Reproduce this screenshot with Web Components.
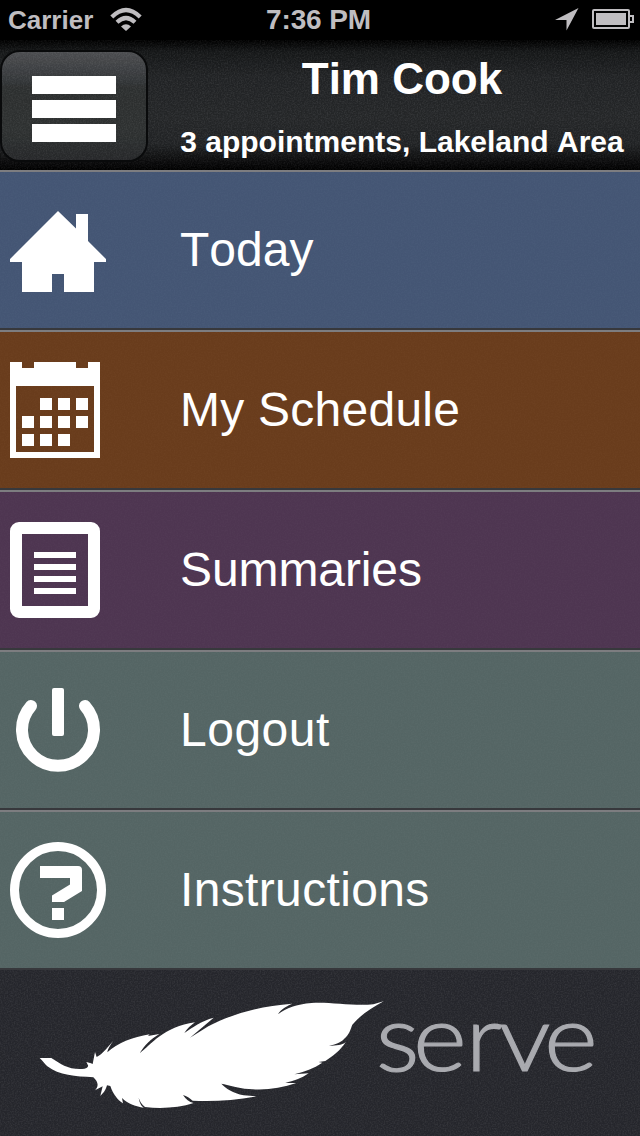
<!DOCTYPE html>
<html lang="en"><head><meta charset="utf-8"><title>Serve</title>
<style>body{margin:0;background:#000;font-family:"Liberation Sans",Arial,sans-serif}</style></head>
<body><serve-app></serve-app>
<script>
const define=(name,html)=>customElements.define(name,class extends HTMLElement{
  constructor(){super();this.attachShadow({mode:'open'}).innerHTML=html;}
});

define('grain-fill',`<style>:host{position:absolute;inset:0;pointer-events:none;overflow:hidden;opacity:var(--grain,.1)}svg{display:block;width:100%;height:100%}</style>
<svg><filter id="n" x="0" y="0" width="100%" height="100%" color-interpolation-filters="sRGB"><feTurbulence type="fractalNoise" baseFrequency=".7" numOctaves="2" seed="4"/><feColorMatrix values="1.6 0 0 0 -.6  1.6 0 0 0 -.6  1.6 0 0 0 -.6  0 0 0 0 1"/></filter><rect width="100%" height="100%" filter="url(#n)"/></svg>`);

define('status-bar',`<style>
:host{display:grid;grid-template-columns:1fr auto 1fr;height:40px;box-sizing:border-box;background:#000;color:#bfbdc0;font-weight:bold;line-height:40px;padding:0 6px 0 8px}
.l{display:flex;gap:17px;font-size:26px}.c{font-size:28px;letter-spacing:-.1px;margin:0 5px 0 0}.r{display:flex;justify-content:flex-end;gap:13px}svg{display:block}
</style><div class="l"><span>Carrier</span><svg width="32" height="40" viewBox="110 0 32 40" fill="none" stroke="#bfbdc0"><path d="M111.8 17Q126 3 140.2 17" stroke-width="4.2"/><path d="M117 22.3Q126 13.8 135 22.3" stroke-width="4.2"/><path d="M121 26.5Q126 22 131 26.5L126 31Z" fill="#bfbdc0" stroke="none"/></svg></div>
<div class="c">7:36 PM</div>
<div class="r"><svg width="24" height="40" viewBox="555 0 24 40"><path d="M578.5 8L566.5 30.5V20H555Z" fill="#bfbdc0"/></svg>
<svg width="42" height="40" viewBox="592 0 42 40"><rect x="593" y="10" width="36" height="18" rx="1" fill="none" stroke="#bfbdc0" stroke-width="2"/><path d="M596 13h30v12h-30z" fill="#bfbdc0"/><path d="M630 16h3v6h-3" fill="none" stroke="#bfbdc0" stroke-width="2"/></svg></div>`);

define('menu-button',`<style>
:host{display:flex;position:relative;overflow:hidden;box-sizing:border-box;width:148px;height:112px;border:2px solid #090a0b;border-radius:20px;background:linear-gradient(#525356,#3b3e41 24%,#303333 34%,#323636 72%,#2a2b2d);flex-direction:column;align-items:center;justify-content:center;gap:6px;flex:none}
i{width:84px;height:18px;background:#fff;position:relative;top:3px;z-index:1}grain-fill{--grain:.08}
</style><grain-fill></grain-fill><i></i><i></i><i></i>`);

define('title-bar',`<style>
:host{position:relative;display:flex;height:130px;box-sizing:border-box;padding:10px 0 0;background:linear-gradient(#000,#17191a 9%,#242628 28%,#282a2c 60%,#242628 80%,#0b0b0c 94%,#000);color:#fff;font-weight:bold}
grain-fill{--grain:.09}
menu-button{z-index:1}.t{position:relative;width:444px;margin-left:32px;text-align:center;white-space:nowrap}
.n{font-size:44px;line-height:50px;padding-top:4px;font-kerning:none}.s{font-size:30px;line-height:34px;margin-top:21px;font-kerning:none}
</style><grain-fill></grain-fill><menu-button></menu-button><div class="t"><div class="n"><slot name="name"></slot></div><div class="s"><slot></slot></div></div>`);

define('menu-row',`<style>
:host{position:relative;display:flex;box-sizing:border-box;height:160px;border-top:2px solid #7d7d80;border-bottom:2px solid #37383c;background:var(--tone);color:#fff;font-size:48px;line-height:156px}
.icon{width:180px;flex:none}.label{position:relative;font-kerning:none;letter-spacing:var(--track,0)}grain-fill{--grain:.02}
</style><grain-fill></grain-fill><div class="icon"><slot name="icon"></slot></div><div class="label"><slot></slot></div>`);

const icon=(name,body)=>define(name,`<style>:host{display:block;position:relative}svg{display:block}</style><svg width="120" height="156" viewBox="0 2 120 156" fill="#fff">${body}</svg>`);
icon('icon-home','<path d="M58 41L76 58.5V44h12v27l18 18v3H94v30H64v-18H52v18H22V92H10v-3Z"/>');
icon('icon-calendar','<path fill-rule="evenodd" d="M10 32h12v6h12v-6h42v6h12v-6h12v96H10ZM16 56v66h78V56Z"/><path d="M40 68h12v12H40zM58 68h12v12H58zM76 68h12v12H76zM22 86h12v12H22zM40 86h12v12H40zM58 86h12v12H58zM76 86h12v12H76zM22 104h12v12H22zM40 104h12v12H40zM58 104h12v12H58z"/>');
icon('icon-list','<path fill-rule="evenodd" d="M19 32h72a9 9 0 0 1 9 9v78a9 9 0 0 1-9 9H19a9 9 0 0 1-9-9V41a9 9 0 0 1 9-9ZM22 44v72h66V44Z"/><path d="M34 62h42v6H34zM34 74h42v6H34zM34 86h42v6H34zM34 98h42v6H34z"/>');
icon('icon-power','<path d="M31 56A36 36 0 1 0 85 56" fill="none" stroke="#fff" stroke-width="12" stroke-linecap="round"/><rect x="52" y="38" width="12" height="48" rx="2"/>');
icon('icon-help','<circle cx="58" cy="80" r="43.5" fill="none" stroke="#fff" stroke-width="9"/><path d="M40 56h38a4 4 0 0 1 4 4v21L64 92H52V85.5L70 74.5V68H40zM52 98h12v12H52z"/>');

define('brand-footer',`<style>
:host{position:relative;display:block;height:166px;background:#292a30}svg{position:relative;display:block}
grain-fill{--grain:.08}
text{font-family:Lato,"Liberation Sans",sans-serif;font-weight:300}
</style><grain-fill></grain-fill><svg width="640" height="166" viewBox="0 970 640 166"><g transform="translate(30 990) scale(.33333)" fill="#fff">
<path d="M29 204L64 204C91 222 116 239 156 237C169 236 176 232 174 226L169 216L183 220L188 222L195 186L200 201C218 192 233 172 249 153C244 162 233 177 232 187C262 160 308 141 359 133L354 138L388 132C363 146 341 169 329 190C362 165 401 110 495 97C484 105 470 117 463 129C487 113 515 92 551 83L480 143L535 109C604 73 686 48 787 41C773 46 750 59 744 73C770 54 798 43 845 39C895 35 972 49 1030 43L1061 34C1026 53 992 74 967 104C960 121 959 132 942 147C934 157 915 164 897 167C918 167 939 165 948 155C930 182 910 197 886 213L866 216L877 218C851 236 824 244 793 253L836 250C814 266 791 272 766 279L799 279C753 295 704 302 657 297C620 295 596 284 574 281C587 295 609 309 641 316L680 319C613 330 552 336 488 332C480 325 470 318 459 315C468 328 477 336 491 339C448 353 395 357 345 351C335 344 329 332 326 323C328 336 331 345 341 353C319 349 295 343 276 324L279 340C264 331 249 312 241 288L231 286C227 301 221 308 211 318L218 289L195 301C207 288 205 276 190 262C137 259 87 256 52 229C45 222 37 211 29 204Z"/></g>
<text transform="scale(1.12 1)" x="335.5 368.7 415.6 445.6 485.7" y="1071" font-size="92" fill="#a9aaaf" stroke="#a9aaaf" stroke-width="1.2">serve</text></svg>`);

define('serve-app',`<style>:host{display:block;width:640px;height:1136px;overflow:hidden}
.today{--tone:#465877}.schedule{--tone:#6c3e1d;--track:.25px}.summary{--tone:#503753;--track:-.1px}.out,.help{--tone:#576867;--track:.5px}.help{--track:.35px}
</style><status-bar></status-bar><title-bar><span slot="name">Tim Cook</span>3 appointments, Lakeland Area</title-bar>
<menu-row class="today"><icon-home slot="icon"></icon-home>Today</menu-row>
<menu-row class="schedule"><icon-calendar slot="icon"></icon-calendar>My Schedule</menu-row>
<menu-row class="summary"><icon-list slot="icon"></icon-list>Summaries</menu-row>
<menu-row class="out"><icon-power slot="icon"></icon-power>Logout</menu-row>
<menu-row class="help"><icon-help slot="icon"></icon-help>Instructions</menu-row>
<brand-footer></brand-footer>`);
</script></body></html>
